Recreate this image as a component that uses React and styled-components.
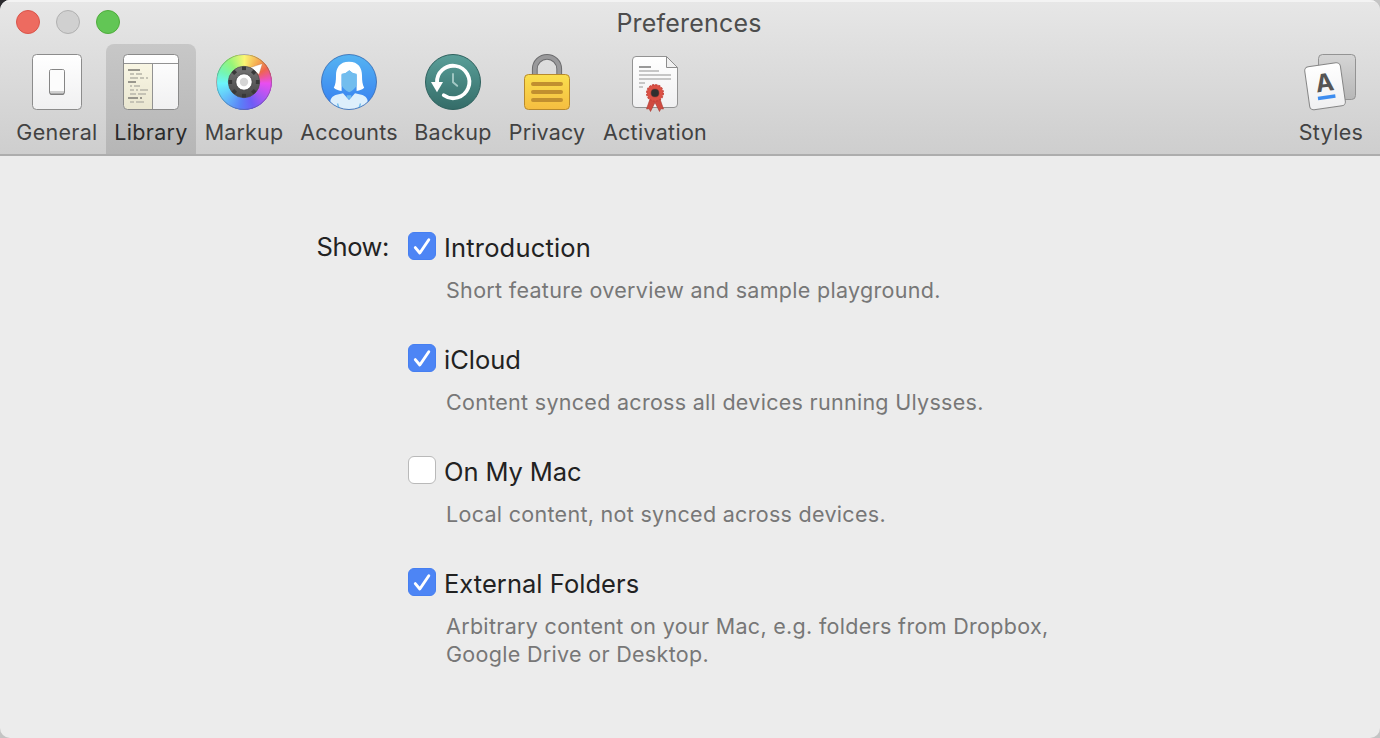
import React from 'react';
import styled, { createGlobalStyle } from 'styled-components';

const GlobalStyle = createGlobalStyle`
  *, *::before, *::after { box-sizing: border-box; }
  body {
    margin: 0;
    background: linear-gradient(135deg, #2b2a2e 0 10px, #c4c4c4 11px);
    font-family: Inter, "Liberation Sans", sans-serif;
  }
`;

const Window = styled.div`
  height: 738px;
  display: flex;
  flex-direction: column;
  overflow: hidden;
  border-radius: 10px;
  background: #ececec;
`;

const Header = styled.header`
  height: 156px;
  flex: none;
  background: linear-gradient(#e7e7e7, #cecece);
  border-bottom: 2px solid #adadad;
  box-shadow: inset 0 2px 0 #f3f3f3;
`;

const TitleBar = styled.div`
  height: 44px;
  display: grid;
  grid-template-columns: 1fr auto 1fr;
  align-items: center;
`;

const Lights = styled.div`
  display: flex;
  gap: 16px;
  padding-left: 16px;
`;

const Light = styled.span`
  width: 24px;
  height: 24px;
  border-radius: 50%;
  background: ${(p) => p.$fill};
  border: 1px solid ${(p) => p.$edge};
`;

const Title = styled.h1`
  margin: 2px 2px 0 0;
  font-size: 25px;
  line-height: 30px;
  font-weight: 400;
  letter-spacing: ${(p) => p.$spacing}px;
  color: #4d4d4d;
`;

const Toolbar = styled.nav`
  display: flex;
  padding: 0 8px;
`;

const Tool = styled.button`
  width: ${(p) => p.$width}px;
  height: 110px;
  margin: ${(p) => (p.$end ? '0 0 0 auto' : '0')};
  padding: 6px 0 0;
  border: 0;
  border-radius: 8px 8px 0 0;
  background: ${(p) => (p.$active ? 'linear-gradient(#c7c7c7, #b6b6b6)' : 'transparent')};
  color: ${(p) => (p.$active ? '#2a2a2a' : '#424242')};
  font: 400 21.5px/28px Inter, "Liberation Sans", sans-serif;
  letter-spacing: ${(p) => p.$spacing}px;
  white-space: nowrap;
  display: flex;
  flex-direction: column;
  align-items: center;
  gap: 4px;
`;

const Icon = styled.svg`
  width: 64px;
  height: 64px;
  display: block;
  flex: none;
`;

const ColorWheel = styled.div`
  width: 64px;
  height: 64px;
  background: conic-gradient(
    #fbf673 0deg, #f5a54f 35deg, #ee6550 58deg, #ec5799 74deg, #e94ef0 92deg,
    #a558f4 130deg, #6f5cf6 160deg, #5a80f7 190deg, #62b6fa 225deg,
    #6cf5fb 268deg, #74f5b4 295deg, #96f578 325deg, #fbf673 360deg
  ) center / 55px 55px no-repeat;
  mask: radial-gradient(circle at center, #000 27.8px, transparent 28.3px);
`;

const Panel = styled.main`
  display: grid;
  grid-template-columns: 389px 1fr;
  column-gap: 19px;
  padding-top: 76px;
  color: #222;
`;

const GroupLabel = styled.div`
  text-align: right;
  font-size: 25.5px;
  line-height: 30px;
  letter-spacing: ${(p) => p.$spacing}px;
`;

const Options = styled.div`
  display: flex;
  flex-direction: column;
`;

const Option = styled.section`
  height: 112px;
`;

const OptionRow = styled.label`
  display: flex;
  gap: 8px;
  height: 30px;
`;

const Box = styled.span`
  width: 28px;
  height: 28px;
  flex: none;
  border-radius: 6px;
  background: ${(p) => (p.$checked ? '#4d85f5' : '#fff')};
  border: 1px solid ${(p) => (p.$checked ? '#467ff1' : '#b9b9b9')};
  svg { display: block; width: 26px; height: 26px; }
`;

const OptionName = styled.span`
  padding-top: 1px;
  font-size: 25.5px;
  line-height: 30px;
  white-space: nowrap;
  letter-spacing: ${(p) => p.$spacing}px;
`;

const Description = styled.p`
  margin: 14px 0 0 38px;
  color: #777;
  font-size: 21.5px;
  line-height: 28px;
`;

const DescriptionLine = styled.span`
  display: block;
  white-space: nowrap;
  letter-spacing: ${(p) => p.$spacing}px;
`;

const GeneralIcon = () => (
  <Icon viewBox="0 0 64 64">
    <defs>
      <linearGradient id="paper" x1="0" y1="0" x2="0" y2="1">
        <stop offset="0" stopColor="#fff" />
        <stop offset="1" stopColor="#f0f0f1" />
      </linearGradient>
    </defs>
    <rect x="7.5" y="4.5" width="49" height="55" rx="4" fill="url(#paper)" stroke="#8c8c8c" />
    <rect x="24.5" y="20" width="15" height="25" rx="2" fill="#777" />
    <rect x="24.5" y="19.5" width="15" height="24.5" rx="2" fill="#cfcfcf" stroke="#858585" />
    <path d="M25 21a1 1 0 0 1 1-1h12a1 1 0 0 1 1 1v20H25z" fill="#fcfcfc" />
  </Icon>
);

const outline = [
  [20, 1, [[9, 21]]],
  [24, 0, [[11, 15], [17, 23]]],
  [28, 0, [[11, 19], [21, 25], [27, 29]]],
  [32, 1, [[9, 17]]],
  [36, 0, [[11, 13], [15, 21]]],
  [40, 0, [[11, 15], [17, 19], [21, 29]]],
  [44, 0, [[11, 17], [19, 27]]],
  [48, 1, [[9, 19], [21, 23]]],
  [52, 0, [[11, 15], [17, 25]]],
];

const LibraryIcon = () => (
  <Icon viewBox="0 0 64 64">
    <defs>
      <linearGradient id="cream" x1="0" y1="0" x2="0" y2="1">
        <stop offset="0" stopColor="#f9f6e4" />
        <stop offset="1" stopColor="#e9e6d0" />
      </linearGradient>
    </defs>
    <rect x="4.5" y="4.5" width="55" height="55" rx="4" fill="url(#paper)" />
    <path d="M5 13.5h28.5v46H9a4 4 0 0 1-4-4z" fill="url(#cream)" />
    <path d="M4.5 13.5h55M33.5 13.5v46" stroke="#929292" fill="none" />
    <rect x="4.5" y="4.5" width="55" height="55" rx="4" fill="none" stroke="#8a8a8a" />
    {outline.map(([y, dark, parts]) =>
      parts.map(([a, b]) => (
        <rect key={`${y}-${a}`} x={a} y={y - 1} width={b - a} height="2" fill={dark ? '#99978d' : '#c5c3b5'} />
      ))
    )}
  </Icon>
);

const MarkupIcon = () => (
  <ColorWheel>
    <Icon viewBox="0 0 64 64">
      <defs>
        <linearGradient id="dial" x1="0" y1="0" x2="0" y2="1">
          <stop offset="0" stopColor="#777" />
          <stop offset="1" stopColor="#454545" />
        </linearGradient>
      </defs>
      <circle cx="32" cy="32" r="27.5" fill="none" stroke="#555" strokeOpacity=".4" />
      <path d="M38.5 17.5 50.3 13.7 47 24.5z" fill="#fff" stroke="#965a37" strokeOpacity=".4" strokeWidth=".6" />
      <circle cx="32" cy="32" r="15.7" fill="url(#dial)" stroke="#4a4a4a" strokeWidth=".7" />
      {[0, 45, 90, 135, 180, 225, 270, 315].map((a) => (
        <rect key={a} x="30" y="16.6" width="4" height="3.5" fill="#383838" transform={`rotate(${a} 32 32)`} />
      ))}
      <circle cx="32" cy="32" r="8.2" fill="#fff" stroke="#3f3f3f" strokeWidth=".8" />
      <circle cx="32" cy="32" r="4.2" fill="#d5d5d5" />
    </Icon>
  </ColorWheel>
);

const AccountsIcon = () => (
  <Icon viewBox="0 0 64 64">
    <defs>
      <linearGradient id="sky" x1="0" y1="0" x2="0" y2="1">
        <stop offset="0" stopColor="#55b4f2" />
        <stop offset="1" stopColor="#367df0" />
      </linearGradient>
      <clipPath id="disc"><circle cx="32" cy="32" r="27.5" /></clipPath>
    </defs>
    <circle cx="32" cy="32" r="27.5" fill="url(#sky)" />
    <g clipPath="url(#disc)">
      <path d="M12.5 62 13.5 50Q14.5 46.5 18.5 45L26 43.2 32 50 38 43.2 45.5 45Q49.5 46.5 50.5 50L51.5 62z" fill="#ddeffc" />
      <path d="M29.7 45.2h4.6v2.2L32 49.3l-2.3-1.9z" fill="#72bdee" />
      <path d="M20.5 53.5 22.5 60M43.5 53.5 41.5 60" stroke="#72bdee" strokeWidth="1.4" />
    </g>
    <path d="M32 11.7C22.5 11.7 19 18 19 25.5 19 31 18.5 34.5 16.8 37.8 18.6 39.6 21 40.6 24.6 40.9V24.5Q29.5 23.5 32.3 20.2 35 23.5 39.6 24.5V40.9C43 40.6 45.4 39.6 47.2 37.8 45.5 34.5 45 31 45 25.5 45 18 41.5 11.7 32 11.7z" fill="#fff" />
    <path d="M32.2 20.4Q35 23 39.6 23.8V35.4Q37.5 39.4 32.2 42.3 26.8 39.4 24.7 35.4V23.8Q29.4 23 32.2 20.4z" fill="#72bdee" />
    <circle cx="32" cy="32" r="27.5" fill="none" stroke="#2b62ad" strokeOpacity=".75" />
  </Icon>
);

const BackupIcon = () => (
  <Icon viewBox="0 0 64 64">
    <defs>
      <linearGradient id="teal" x1="0" y1="0" x2="0" y2="1">
        <stop offset="0" stopColor="#5a9f99" />
        <stop offset="1" stopColor="#346c68" />
      </linearGradient>
    </defs>
    <circle cx="32" cy="32" r="27.5" fill="url(#teal)" stroke="#2f615e" />
    <path d="M16 33A16.2 16.2 0 1 1 22.8 45.2" fill="none" stroke="#fff" strokeWidth="3.8" strokeLinecap="round" />
    <path d="M10 32H22L16 42.3z" fill="#fff" />
    <path d="M32 24V32.3L36.2 35.8" fill="none" stroke="#a3c9c5" strokeWidth="1.9" strokeLinecap="round" strokeLinejoin="round" />
  </Icon>
);

const PrivacyIcon = () => (
  <Icon viewBox="0 0 64 64">
    <defs>
      <linearGradient id="gold" x1="0" y1="0" x2="0" y2="1">
        <stop offset="0" stopColor="#fadf4e" />
        <stop offset="1" stopColor="#f5bd40" />
      </linearGradient>
    </defs>
    <path d="M19.8 27V19a12.2 12.2 0 0 1 24.4 0V27" fill="none" stroke="#6c6c6e" strokeWidth="5.8" />
    <path d="M19.8 27V19a12.2 12.2 0 0 1 24.4 0V27" fill="none" stroke="#99999b" strokeWidth="3.8" />
    <rect x="9.5" y="24.5" width="45" height="35" rx="4" fill="url(#gold)" stroke="#b88a2d" />
    <path d="M18 34H46M18 42H46M18 50H46" stroke="#c18f2f" strokeWidth="4" strokeLinecap="round" />
  </Icon>
);

const ActivationIcon = () => (
  <Icon viewBox="0 0 64 64">
    <path d="M13 6.5H43.5L54.5 17.5V54a3.5 3.5 0 0 1-3.5 3.5H13A3.5 3.5 0 0 1 9.5 54V10A3.5 3.5 0 0 1 13 6.5z" fill="url(#paper)" stroke="#939393" />
    <path d="M43.5 6.5V17.5H54.5z" fill="#f0f0f0" stroke="#8d8d8d" />
    <path d="M16 17H28" stroke="#999" strokeWidth="2" />
    <path d="M16 21H36M16 25H48M16 29H48M16 33H22M16 37H20" stroke="#c6c6c6" strokeWidth="2" />
    <path d="M27 49 23.5 59 26.2 58.7 27.5 61.5 32 52.5 36.5 61.5 37.8 58.7 40.5 59 37 49z" fill="#cf4a40" stroke="#a83a33" strokeWidth=".6" />
    <circle cx="32" cy="43" r="8.2" fill="#dc5145" />
    <circle cx="32" cy="43" r="8.3" fill="none" stroke="#c6443b" strokeWidth="1.4" strokeDasharray="2.2 1.06" />
    <circle cx="32" cy="43" r="4.1" fill="#303030" stroke="#a03a33" strokeWidth=".5" />
  </Icon>
);

const StylesIcon = () => (
  <Icon viewBox="0 0 64 64">
    <defs>
      <linearGradient id="card" x1="0" y1="0" x2="0" y2="1">
        <stop offset="0" stopColor="#d5d5d5" />
        <stop offset="1" stopColor="#b7b7b7" />
      </linearGradient>
    </defs>
    <rect x="19.5" y="4.5" width="37" height="45" rx="4" fill="url(#card)" stroke="#939393" />
    <g transform="rotate(-8 26 36)">
      <rect x="8" y="14.5" width="36" height="43.5" rx="4" fill="url(#paper)" stroke="#868686" />
      <text x="26.2" y="41.3" textAnchor="middle" fontFamily="Inter, sans-serif" fontWeight="700" fontSize="24.5" letterSpacing="0" fill="#555">A</text>
      <rect x="17.3" y="45.6" width="17.6" height="3.6" fill="#3d8df0" />
    </g>
  </Icon>
);

const tools = [
  { name: 'General', width: 98, icon: GeneralIcon, spacing: 0.3 },
  { name: 'Library', width: 90, icon: LibraryIcon, spacing: 0.3, active: true },
  { name: 'Markup', width: 96, icon: MarkupIcon, spacing: 0.15 },
  { name: 'Accounts', width: 114, icon: AccountsIcon, spacing: 0.22 },
  { name: 'Backup', width: 94, icon: BackupIcon, spacing: 0.2 },
  { name: 'Privacy', width: 94, icon: PrivacyIcon, spacing: 0.15 },
  { name: 'Activation', width: 122, icon: ActivationIcon, spacing: 0.3 },
  { name: 'Styles', width: 82, icon: StylesIcon, spacing: 0.35, end: true },
];

const options = [
  { name: 'Introduction', spacing: 0.18, checked: true, lines: [['Short feature overview and sample playground.', 0.31]] },
  { name: 'iCloud', spacing: 0, checked: true, lines: [['Content synced across all devices running Ulysses.', 0.29]] },
  { name: 'On My Mac', spacing: -0.1, checked: false, lines: [['Local content, not synced across devices.', 0.3]] },
  {
    name: 'External Folders',
    spacing: 0.04,
    checked: true,
    lines: [
      ['Arbitrary content on your Mac, e.g. folders from Dropbox,', 0.315],
      ['Google Drive or Desktop.', 0.31],
    ],
  },
];

export default function App() {
  return (
    <>
      <GlobalStyle />
      <Window>
        <Header>
          <TitleBar>
            <Lights>
              <Light $fill="#ed6b60" $edge="#d9544a" />
              <Light $fill="#d0d0d0" $edge="#b0b0b0" />
              <Light $fill="#62c655" $edge="#4fac3c" />
            </Lights>
            <Title $spacing={0.2}>Preferences</Title>
          </TitleBar>
          <Toolbar>
            {tools.map(({ name, width, icon: ToolIcon, spacing, active, end }) => (
              <Tool key={name} $width={width} $spacing={spacing} $active={active} $end={end}>
                <ToolIcon />
                {name}
              </Tool>
            ))}
          </Toolbar>
        </Header>
        <Panel>
          <GroupLabel $spacing={-0.4}>Show:</GroupLabel>
          <Options>
            {options.map(({ name, spacing, checked, lines }) => (
              <Option key={name}>
                <OptionRow>
                  <Box $checked={checked}>
                    {checked && (
                      <svg viewBox="0 0 26 26">
                        <path d="M6.3 14.6 10.8 20 19.8 6.8" fill="none" stroke="#fff" strokeWidth="2.9" strokeLinecap="round" strokeLinejoin="round" />
                      </svg>
                    )}
                  </Box>
                  <OptionName $spacing={spacing}>{name}</OptionName>
                </OptionRow>
                <Description>
                  {lines.map(([text, s]) => (
                    <DescriptionLine key={text} $spacing={s}>{text}</DescriptionLine>
                  ))}
                </Description>
              </Option>
            ))}
          </Options>
        </Panel>
      </Window>
    </>
  );
}
